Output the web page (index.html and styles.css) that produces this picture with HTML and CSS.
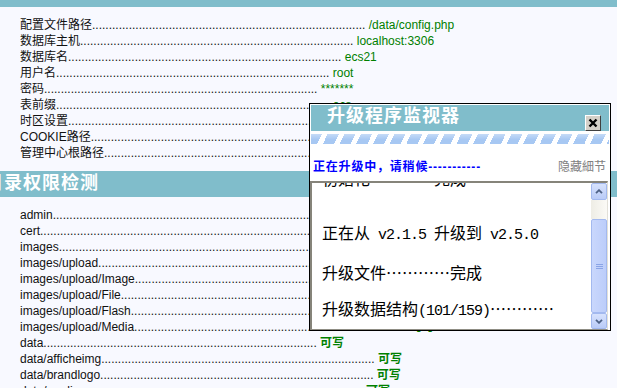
FILE: index.html
```html
<!DOCTYPE html>
<html lang="zh-CN">
<head>
  <meta charset="UTF-8" />
  <title>ECShop 升级程序</title>
  <link rel="stylesheet" href="styles.css">
</head>
<body>
  <div class="topbar"></div>

  <ul class="checklist">
    <li>配置文件路径<span class="lead"></span> <span class="val">/data/config.php</span></li>
    <li>数据库主机<span class="lead"></span> <span class="val">localhost:3306</span></li>
    <li>数据库名<span class="lead"></span> <span class="val">ecs21</span></li>
    <li>用户名<span class="lead"></span> <span class="val">root</span></li>
    <li>密码<span class="lead"></span> <span class="val">*******</span></li>
    <li>表前缀<span class="lead"></span> <span class="val">ecs_</span></li>
    <li>时区设置<span class="lead"></span> <span class="val">Asia/Shanghai</span></li>
    <li>COOKIE路径<span class="lead"></span> <span class="val">/</span></li>
    <li>管理中心根路径<span class="lead"></span> <span class="val">admin/</span></li>
  </ul>

  <h2 class="section">目录权限检测</h2>

  <ul class="checklist">
    <li>admin<span class="lead"></span> <span class="ok">可写</span></li>
    <li>cert<span class="lead"></span> <span class="ok">可写</span></li>
    <li>images<span class="lead"></span> <span class="ok">可写</span></li>
    <li>images/upload<span class="lead"></span> <span class="ok">可写</span></li>
    <li>images/upload/Image<span class="lead"></span> <span class="ok">可写</span></li>
    <li>images/upload/File<span class="lead"></span> <span class="ok">可写</span></li>
    <li>images/upload/Flash<span class="lead"></span> <span class="ok">可写</span></li>
    <li>images/upload/Media<span class="lead"></span> <span class="ok">可写</span></li>
    <li>data<span class="lead"></span> <span class="ok">可写</span></li>
    <li>data/afficheimg<span class="lead"></span> <span class="ok">可写</span></li>
    <li>data/brandlogo<span class="lead"></span> <span class="ok">可写</span></li>
    <li>data/cardimg<span class="lead"></span> <span class="ok">可写</span></li>
  </ul>

  <div class="monitor">
    <div class="monitor-title">
      <span>升级程序监视器</span>
      <button class="close" title="关闭">
        <svg width="10" height="10" viewBox="0 0 10 10"><path d="M1.5 1.5L8.5 8.5M8.5 1.5L1.5 8.5" stroke="#000" stroke-width="2.4" /></svg>
      </button>
    </div>
    <div class="stripes"></div>
    <div class="status">
      <span class="busy">正在升级中，请稍候-----------</span>
      <a class="toggle">隐藏細节</a>
    </div>
    <div class="log">
      <div class="log-body">
        <p>初始化…………完成</p>
        <p class="gap">正在从<span class="en"> v2.1.5 </span>升级到<span class="en"> v2.5.0</span></p>
        <p>升级文件…………完成</p>
        <p>升级数据结构<span class="en">(101/159)</span>…………</p>
      </div>
      <div class="scrollbar">
        <div class="sb-btn up">
          <svg width="8" height="5" viewBox="0 0 8 5"><path d="M1 4.2L4 1.2L7 4.2" fill="none" stroke="#4d6185" stroke-width="1.8" /></svg>
        </div>
        <div class="sb-track"></div>
        <div class="sb-thumb">
          <svg width="7" height="7" viewBox="0 0 7 7"><path d="M0 1.5H7M0 3.5H7M0 5.5H7" stroke="#8aa4e6" stroke-width="1" /></svg>
        </div>
        <div class="sb-btn down">
          <svg width="8" height="5" viewBox="0 0 8 5"><path d="M1 0.8L4 3.8L7 0.8" fill="none" stroke="#4d6185" stroke-width="1.8" /></svg>
        </div>
      </div>
    </div>
  </div>
</body>
</html>
```

FILE: styles.css
```css
:root {
  --teal: #80bdcb;
  --page-bg: #f8f9ff;
  --ok: #008000;
}
body {
  margin: 0;
  background: var(--page-bg);
  color: #111;
  font: 12px/16px "Liberation Sans", "Noto Sans CJK SC", sans-serif;
}
.topbar {
  height: 7px;
  background: var(--teal);
}
.checklist {
  list-style: none;
  margin: 0;
  padding: 10px 0 10px 20px;
  white-space: nowrap;
}
.lead::after {
  content: ".........." ".........." ".........." ".........." ".........." ".........." ".........." ".........." "..";
}
.val {
  color: var(--ok);
}
.ok {
  color: var(--ok);
  font-weight: bold;
}
.section {
  margin: 0;
  height: 26px;
  padding-bottom: 2px;
  box-sizing: border-box;
  background: var(--teal);
  color: #fff;
  font: bold 18px/24px "Liberation Sans", "Noto Sans CJK SC", sans-serif;
  letter-spacing: 1px;
  text-indent: -15px;
  white-space: nowrap;
  overflow: hidden;
}

/* upgrade monitor window */
.monitor {
  position: absolute;
  left: 309px;
  top: 103px;
  width: 302px;
  height: 228px;
  box-sizing: border-box;
  border: 1px solid #000;
  padding: 1px 1px 0;
  background: #fff;
  display: flex;
  flex-direction: column;
}
.monitor-title {
  height: 26px;
  flex: none;
  display: flex;
  justify-content: space-between;
  padding-left: 16px;
  background: var(--teal);
  color: #fff;
  font: bold 18px/22px "Liberation Sans", "Noto Sans CJK SC", sans-serif;
  letter-spacing: 1px;
}
.close {
  align-self: flex-end;
  width: 16px;
  height: 16px;
  margin-right: 8px;
  padding: 0;
  box-sizing: border-box;
  background: #d4d0c8;
  border: 1px solid;
  border-color: #fff #404040 #404040 #fff;
  display: flex;
  align-items: center;
  justify-content: center;
}
.stripes {
  flex: none;
  height: 10px;
  margin-top: 3px;
  background:
    linear-gradient(rgba(255, 255, 255, 0.35), rgba(255, 255, 255, 0) 55%),
    repeating-linear-gradient(116deg, #a7c8f3 0 10px, #fff 10px 15px);
}
.status {
  flex: none;
  height: 37px;
  box-sizing: border-box;
  padding: 0 3px 7px 2px;
  display: flex;
  justify-content: space-between;
  align-items: flex-end;
  line-height: 14px;
}
.busy {
  color: #00f;
  font-weight: bold;
  letter-spacing: 0.8px;
}
.toggle {
  color: #808080;
  cursor: pointer;
}
.log {
  flex: 1;
  min-height: 0;
  margin: 0 1px 0 -1px;
  border-style: solid;
  border-width: 2px 1px 1px 2px;
  border-color: #86847a #e2e0d8 #8f8d84 #86847a;
  display: flex;
  overflow: hidden;
}
.log-body {
  flex: 1;
  overflow: hidden;
  padding-left: 10px;
  color: #000;
  font: 16px/20px "Noto Sans CJK SC", sans-serif;
  white-space: nowrap;
}
.log-body p {
  margin: 16px 0;
}
.log-body p:first-child {
  margin-top: -15px;
}
.log-body .gap {
  margin-top: 34px;
}
.en {
  font-family: "Liberation Mono", monospace;
  font-size: 15px;
  letter-spacing: -1px;
}
.scrollbar {
  width: 16px;
  flex: none;
  display: flex;
  flex-direction: column;
}
.sb-btn {
  box-sizing: border-box;
  border: 1px solid #a3b9ef;
  border-radius: 2px;
  background: linear-gradient(#d7e2fd, #b9cbf7);
  display: flex;
  align-items: center;
  justify-content: center;
}
.sb-btn.up {
  height: 17px;
}
.sb-btn.down {
  height: 16px;
}
.sb-track {
  height: 19px;
  background: linear-gradient(90deg, #eeede5, #fbfaf6);
}
.sb-thumb {
  flex: 1;
  box-sizing: border-box;
  border: 1px solid #a3b9ef;
  border-radius: 2px;
  background: linear-gradient(90deg, #c9d7fc, #bccdfa);
  display: flex;
  align-items: center;
  justify-content: center;
}
```
